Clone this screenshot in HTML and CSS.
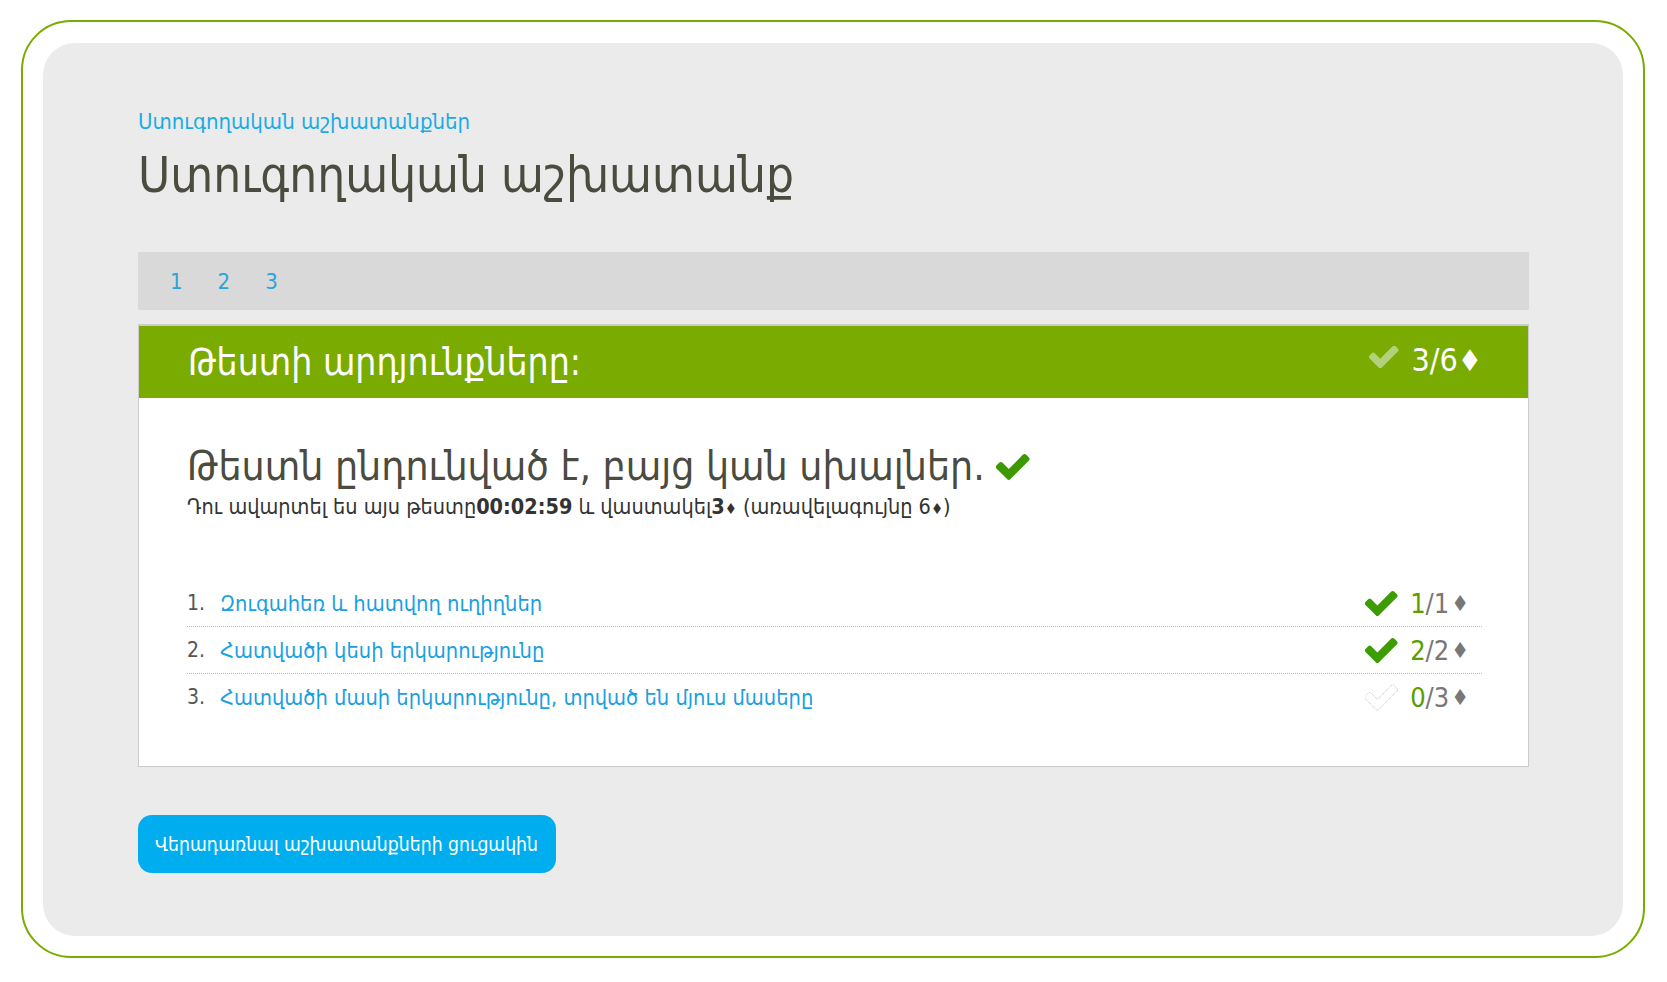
FILE: index.html
```html
<!DOCTYPE html>
<html lang="hy">
<head>
<meta charset="utf-8">
<title>Ստուգողական աշխատանք</title>
<link rel="stylesheet" href="styles.css">
</head>
<body>
<svg width="0" height="0" class="defs">
  <defs>
    <path id="chk" d="M1671 566q0 40-28 68l-724 724-136 136q-28 28-68 28t-68-28l-136-136-362-362q-28-28-28-68t28-68l136-136q28-28 68-28t68 28l294 295 656-657q28-28 68-28t68 28l136 136q28 28 28 68z"/>
  </defs>
</svg>
<div class="frame">
  <div class="panel">
    <a class="crumb" href="#">Ստուգողական աշխատանքներ</a>
    <h1 class="title">Ստուգողական աշխատանք</h1>
    <div class="tabs">
      <a class="tab" href="#">1</a>
      <a class="tab" href="#">2</a>
      <a class="tab" href="#">3</a>
    </div>
    <div class="card">
      <div class="card-head">
        <span class="head-title">Թեստի արդյունքները:</span>
        <span class="head-score">
          <svg class="ico head-chk" viewBox="130 420 1560 1020"><use href="#chk"/></svg>
          <span>3/6<span class="dia">♦</span></span>
        </span>
      </div>
      <div class="card-body">
        <h2 class="verdict">Թեստն ընդունված է, բայց կան սխալներ. <svg class="ico verdict-chk" viewBox="130 420 1560 1020"><use href="#chk"/></svg></h2>
        <p class="summary">Դու ավարտել ես այս թեստը<b>00:02:59</b> և վաստակել<b>3<span class="dia-s">♦</span></b> (առավելագույնը 6<span class="dia-s">♦</span>)</p>
        <ol class="items">
          <li class="item">
            <span class="num">1.</span>
            <a class="link" href="#">Զուգահեռ և հատվող ուղիղներ</a>
            <span class="score"><svg class="ico row-chk" viewBox="130 420 1560 1020"><use href="#chk"/></svg><span class="got">1</span><span class="of">/1</span><span class="dia-g">♦</span></span>
          </li>
          <li class="item">
            <span class="num">2.</span>
            <a class="link" href="#">Հատվածի կեսի երկարությունը</a>
            <span class="score"><svg class="ico row-chk" viewBox="130 420 1560 1020"><use href="#chk"/></svg><span class="got">2</span><span class="of">/2</span><span class="dia-g">♦</span></span>
          </li>
          <li class="item">
            <span class="num">3.</span>
            <a class="link" href="#">Հատվածի մասի երկարությունը, տրված են մյուս մասերը</a>
            <span class="score"><svg class="ico row-chk empty" viewBox="130 420 1560 1020"><use href="#chk"/></svg><span class="got">0</span><span class="of">/3</span><span class="dia-g">♦</span></span>
          </li>
        </ol>
      </div>
    </div>
    <a class="back" href="#">Վերադառնալ աշխատանքների ցուցակին</a>
  </div>
</div>
</body>
</html>
```
FILE: styles.css
```css
html, body {
  margin: 0;
  padding: 0;
  background: #ffffff;
}
body {
  font-family: "DejaVu Sans Condensed", "DejaVu Sans", sans-serif;
  color: #333333;
}
.defs {
  position: absolute;
  width: 0;
  height: 0;
}
.frame {
  box-sizing: border-box;
  margin: 20px 0 0 21px;
  width: 1624px;
  height: 938px;
  border: 2px solid #7aab00;
  border-radius: 50px;
  padding: 21px 20px 20px 20px;
}
.panel {
  box-sizing: border-box;
  height: 893px;
  background: #ebebeb;
  border-radius: 32px;
  padding: 66px 94px 0 95px;
  display: flex;
  flex-direction: column;
  align-items: flex-start;
}
a {
  text-decoration: none;
}
.crumb {
  font-size: 22px;
  line-height: 26px;
  color: #1aabe6;
}
.title {
  margin: 12px 0 0 0;
  font-size: 49px;
  line-height: 58px;
  font-weight: normal;
  color: #4b4b3f;
}
.tabs {
  align-self: stretch;
  margin-top: 47px;
  height: 58px;
  background: #d9d9d9;
  display: flex;
  align-items: center;
  gap: 35px;
  padding-left: 32px;
}
.tab {
  font-size: 22px;
  color: #2aa3dc;
}
.card {
  align-self: stretch;
  margin-top: 14px;
  background: #ffffff;
  border: 1px solid #cccccc;
  border-top-width: 2px;
}
.card-head {
  height: 72px;
  background: #7aab00;
  color: #ffffff;
  display: flex;
  align-items: center;
  justify-content: space-between;
  padding: 0 46px 0 49px;
}
.head-title {
  font-size: 37px;
}
.head-score {
  display: flex;
  align-items: center;
  gap: 12px;
  font-size: 32px;
  margin-top: -4px;
}
.ico {
  display: inline-block;
  fill: currentColor;
}
.head-chk {
  width: 30px;
  height: 22px;
  color: #b3d17a;
  margin-top: -6px;
}
.dia {
  font-size: 30px;
}
.card-body {
  padding: 43px 46px 46px 48px;
}
.verdict {
  margin: 0;
  font-size: 40.6px;
  line-height: 50px;
  font-weight: normal;
  color: #4b4b3f;
}
.verdict-chk {
  width: 34px;
  height: 26px;
  color: #3c9a00;
}
.summary {
  margin: 3px 0 0 0;
  font-size: 21.5px;
  line-height: 26px;
  color: #333333;
}
.dia-s {
  font-size: 15px;
}
.items {
  list-style: none;
  margin: 58px 0 0 0;
  padding: 0;
}
.item {
  display: flex;
  align-items: center;
  height: 46px;
  border-bottom: 1px dotted #bbbbbb;
}
.item:last-child {
  border-bottom: none;
}
.num {
  width: 33px;
  font-size: 21px;
  color: #555555;
}
.link {
  font-size: 21.7px;
  color: #1a9fe0;
  flex: 1;
}
.score {
  display: flex;
  align-items: center;
  font-size: 27px;
  color: #777777;
  padding-right: 13px;
}
.row-chk {
  width: 33px;
  height: 27px;
  color: #3c9d00;
  margin-right: 12px;
}
.row-chk.empty {
  fill: none;
  stroke: #b8b8b8;
  stroke-width: 45;
  stroke-dasharray: 45 45;
}
.got {
  color: #5a9e00;
}
.dia-g {
  font-size: 22px;
  margin-left: 2px;
}
.back {
  margin-top: 48px;
  height: 58px;
  box-sizing: border-box;
  padding: 0 18px 0 17px;
  display: flex;
  align-items: center;
  background: #00aeef;
  color: #ffffff;
  font-size: 19.2px;
  border-radius: 14px;
}
```
